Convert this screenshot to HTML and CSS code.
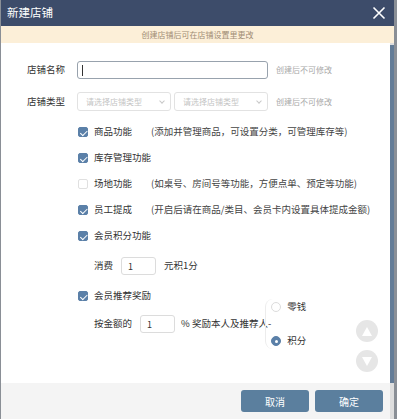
FILE: index.html
```html
<!DOCTYPE html>
<html lang="zh-CN">
<head>
  <meta charset="UTF-8">
  <title>新建店铺</title>
  <link rel="stylesheet" href="styles.css">
</head>
<body>

<div class="dialog">
  <div class="dialog-head">
    <span class="dialog-title">新建店铺</span>
    <svg class="close" width="14" height="14" viewBox="0 0 14 14">
      <path d="M1.5 1.5 L12.5 12.5 M12.5 1.5 L1.5 12.5" stroke="#fff" stroke-width="1.6" fill="none"/>
    </svg>
  </div>
  <div class="notice">创建店铺后可在店铺设置里更改</div>

  <div class="dialog-main">
    <div class="main-col">
      <div class="form">
        <div class="form-row row-name">
          <span class="label">店铺名称</span>
          <div class="text-input focused"><span class="caret"></span></div>
          <span class="hint">创建后不可修改</span>
        </div>

        <div class="form-row row-type">
          <span class="label">店铺类型</span>
          <div class="select">请选择店铺类型<span class="chev"></span></div>
          <div class="select">请选择店铺类型<span class="chev"></span></div>
          <span class="hint">创建后不可修改</span>
        </div>

        <div class="check-row">
          <span class="check on"></span>
          <span class="check-label">商品功能</span>
          <span class="desc">(添加并管理商品，可设置分类，可管理库存等)</span>
        </div>
        <div class="check-row">
          <span class="check on"></span>
          <span class="check-label">库存管理功能</span>
        </div>
        <div class="check-row">
          <span class="check"></span>
          <span class="check-label">场地功能</span>
          <span class="desc">(如桌号、房间号等功能，方便点单、预定等功能)</span>
        </div>
        <div class="check-row">
          <span class="check on"></span>
          <span class="check-label">员工提成</span>
          <span class="desc">(开启后请在商品/类目、会员卡内设置具体提成金额)</span>
        </div>
        <div class="check-row">
          <span class="check on"></span>
          <span class="check-label">会员积分功能</span>
        </div>

        <div class="sub-row row-points">
          <span>消费</span>
          <div class="num-input">1</div>
          <span>元积1分</span>
        </div>

        <div class="check-row">
          <span class="check on"></span>
          <span class="check-label">会员推荐奖励</span>
        </div>

        <div class="sub-row row-reward">
          <span>按金额的</span>
          <div class="num-input">1</div>
          <span class="pct">% 奖励本人及推荐人-</span>
          <div class="radio-group">
            <div class="radio-item"><span class="radio"></span>零钱</div>
            <div class="radio-item"><span class="radio on"></span>积分</div>
          </div>
        </div>

        <div class="scroll-btns">
          <span class="round-btn">
            <svg width="10" height="9" viewBox="0 0 10 9"><path d="M5 0 L10 9 L0 9 Z" fill="#fff"/></svg>
          </span>
          <span class="round-btn">
            <svg width="10" height="9" viewBox="0 0 10 9"><path d="M0 0 L10 0 L5 9 Z" fill="#fff"/></svg>
          </span>
        </div>
      </div>

      <div class="footer">
        <button class="btn">取消</button>
        <button class="btn">确定</button>
      </div>
    </div>

    <div class="scrollbar"><div class="thumb"></div></div>
  </div>
</div>

</body>
</html>
```

FILE: styles.css
```css
* {
  margin: 0;
  padding: 0;
  box-sizing: border-box;
}
html, body {
  height: 100%;
}
body {
  font-family: "Noto Sans CJK SC", "Noto Sans", sans-serif;
  font-size: 9.5px;
  color: #333;
  background: #fff;
  overflow: hidden;
}

.dialog {
  height: 100%;
  display: flex;
  flex-direction: column;
  border-left: 1px solid #8a8f96;
  border-right: 3px solid #8a8f96;
}

.dialog-head {
  height: 26px;
  background: #3d4c6a;
  display: flex;
  align-items: center;
  justify-content: space-between;
  padding: 0 8px 0 6px;
}
.dialog-title {
  color: #fff;
  font-size: 11.5px;
  line-height: 1;
}

.notice {
  height: 17px;
  background: #fcefd8;
  color: #a08c74;
  font-size: 8px;
  line-height: 17px;
  text-align: center;
}

.dialog-main {
  flex: 1;
  display: flex;
  min-height: 0;
}
.main-col {
  flex: 1;
  display: flex;
  flex-direction: column;
}

.form {
  flex: 1;
  position: relative;
  padding: 18px 0 0 26px;
  line-height: 1;
}

.form-row {
  display: flex;
  align-items: center;
}
.label {
  width: 50px;
}
.row-name {
  height: 18px;
}
.row-type {
  height: 19px;
  margin-top: 13px;
  margin-bottom: 8px;
}

.text-input {
  width: 191px;
  height: 18px;
  border: 1px solid #c7ccd2;
  border-radius: 3px;
  display: flex;
  align-items: center;
  padding-left: 4px;
}
.text-input.focused {
  border-color: #98a2ad;
}
.caret {
  width: 1px;
  height: 11px;
  background: #333;
}

.hint {
  margin-left: 8px;
  color: #a8a8a8;
  font-size: 8px;
}

.select {
  width: 94px;
  height: 19px;
  border: 1px solid #e2e2e2;
  border-radius: 3px;
  color: #c4c4c4;
  font-size: 8px;
  display: flex;
  align-items: center;
  justify-content: space-between;
  padding: 0 6px 0 8px;
}
.select + .select {
  margin-left: 3px;
}
.chev {
  width: 4px;
  height: 4px;
  border-right: 1px solid #c8c8c8;
  border-bottom: 1px solid #c8c8c8;
  transform: rotate(45deg);
  margin-top: -2px;
}

.check-row {
  height: 26px;
  display: flex;
  align-items: center;
  margin-left: 51px;
}
.check {
  width: 10px;
  height: 10px;
  border: 1px solid #e0e0e0;
  border-radius: 2px;
  background: #fff;
  margin-right: 6px;
  position: relative;
}
.check.on {
  background: #5b80a8;
  border-color: #5b80a8;
}
.check.on::after {
  content: "";
  position: absolute;
  left: 2.5px;
  top: 0.5px;
  width: 3px;
  height: 5.5px;
  border-right: 1.5px solid #fff;
  border-bottom: 1.5px solid #fff;
  transform: rotate(45deg);
}
.check-label {
  width: 57px;
  white-space: nowrap;
}
.desc {
  color: #444;
}

.sub-row {
  display: flex;
  align-items: center;
  margin-left: 67px;
}
.row-points {
  height: 34px;
}
.row-points .num-input {
  margin: 0 8px 0 8px;
}
.row-reward {
  height: 50px;
  margin-top: -10px;
}
.row-reward .num-input {
  margin: 0 6px 0 8px;
}

.num-input {
  width: 35px;
  height: 18px;
  border: 1px solid #dcdcdc;
  border-radius: 3px;
  padding-left: 6px;
  display: flex;
  align-items: center;
  font-size: 9px;
}

.radio-group {
  height: 50px;
  display: flex;
  flex-direction: column;
  justify-content: space-between;
  margin-left: -6px;
  padding-left: 5px;
  border-left: 1px solid #ececec;
  border-radius: 8px 0 0 8px;
}
.radio-item {
  height: 16px;
  display: flex;
  align-items: center;
}
.radio {
  width: 10px;
  height: 10px;
  border-radius: 50%;
  border: 1px solid #dcdcdc;
  background: #fff;
  margin-right: 6px;
  position: relative;
}
.radio.on {
  background: #5b80a8;
  border-color: #5b80a8;
}
.radio.on::after {
  content: "";
  position: absolute;
  left: 2.5px;
  top: 2.5px;
  width: 3px;
  height: 3px;
  border-radius: 50%;
  background: #fff;
}

.scroll-btns {
  position: absolute;
  right: 12px;
  top: 277px;
  display: flex;
  flex-direction: column;
  gap: 8px;
}
.round-btn {
  width: 22px;
  height: 22px;
  border-radius: 50%;
  background: #e6e6e6;
  display: flex;
  align-items: center;
  justify-content: center;
}

.footer {
  height: 36px;
  background: #f4f4f4;
  display: flex;
  justify-content: flex-end;
  align-items: flex-start;
  gap: 6px;
  padding: 7px 7px 0 0;
}
.btn {
  width: 68px;
  height: 22px;
  border: none;
  border-radius: 3px;
  background: #5b7f9e;
  color: #fff;
  font-family: inherit;
  font-size: 10px;
}

.scrollbar {
  width: 4px;
  background: #dedede;
}
.thumb {
  height: 338px;
  margin-top: 2px;
  background: #637c97;
}
```
